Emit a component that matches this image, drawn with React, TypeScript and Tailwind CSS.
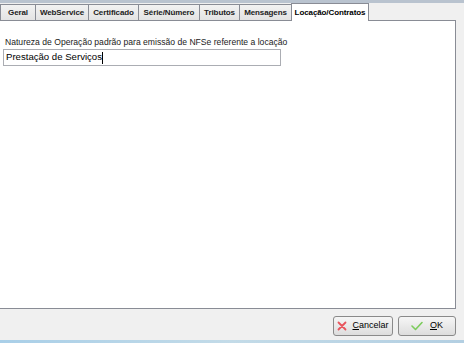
import React from "react"

const tabs = ["Geral", "WebService", "Certificado", "Série/Número", "Tributos", "Mensagens", "Locação/Contratos"]
const tabWidths = ["w-[36px]", "w-[53px]", "w-[50px]", "w-[61px]", "w-[40px]", "w-[52px]", "w-[78px]"]

const App = () => {
    return (
        <div className="w-[464px] h-[343px] bg-[#f0f0f0] flex flex-col overflow-hidden" style={{ fontFamily: "'Liberation Sans', Arial, sans-serif" }}>
            {/* tab strip */}
            <div className="h-[3px] bg-[#b9c3cf] shrink-0"></div>
            <div className="flex items-end h-[17px] shrink-0 bg-[#f0f0f0]">
                {tabs.map((tab, i) => {
                    const selected = i === tabs.length - 1
                    return selected ? (
                        <div key={tab} className={`${tabWidths[i]} h-[18px] -mb-px -ml-px bg-white border border-b-0 border-[#898c95] flex items-center justify-center whitespace-nowrap overflow-hidden text-[8px] font-bold tracking-[-0.1px] text-black z-10`}>
                            {tab}
                        </div>
                    ) : (
                        <div key={tab} className={`${tabWidths[i]} h-[16px] bg-gradient-to-b from-[#f2f2f2] to-[#e3e3e3] border-t border-r first:border-l border-[#898c95] flex items-center justify-center whitespace-nowrap overflow-hidden text-[8px] font-bold tracking-[-0.1px] text-[#222]`}>
                            {tab}
                        </div>
                    )
                })}
            </div>
            {/* tab panel */}
            <div className="flex flex-1 pr-[8px]">
                <div className="flex-1 bg-white border-t border-r border-b border-[#898c95] px-[3px] pt-[16px]">
                    <p className="text-[8.6px] text-[#222] leading-[11px] pl-[2px] whitespace-nowrap">Natureza de Operação padrão para emissão de NFSe referente a locação</p>
                    <div className="w-[278px] h-[17px] mt-[1px] border border-[#abadb3] flex items-center px-[2px] text-[9.6px] text-black whitespace-nowrap">
                        Prestação de Serviços<span className="w-px h-[12px] bg-black"></span>
                    </div>
                </div>
            </div>
            {/* bottom bar */}
            <div className="h-[31px] shrink-0 flex items-center justify-end gap-[5px] pr-[8px] pt-[2px]">
                <button className="w-[60px] h-[20px] rounded-[3px] border border-[#8a8a8a] bg-gradient-to-b from-[#f6f6f6] to-[#dddddd] flex items-center justify-center gap-[5px] text-[9px] text-black">
                    <svg width="10" height="10" viewBox="0 0 10 10"><path d="M1.5 1.5 L8.5 8.5 M8.5 1.5 L1.5 8.5" stroke="#e8545c" strokeWidth="1.8" strokeLinecap="round" /></svg>
                    <span><u>C</u>ancelar</span>
                </button>
                <button className="w-[58px] h-[20px] rounded-[3px] border border-[#8a8a8a] bg-gradient-to-b from-[#f6f6f6] to-[#dddddd] flex items-center justify-center gap-[7px] text-[9px] text-black">
                    <svg width="12" height="10" viewBox="0 0 12 10"><path d="M1 5 L4.5 8.5 L11 1.5" stroke="#7ccc5c" strokeWidth="1.6" fill="none" strokeLinecap="round" strokeLinejoin="round" /></svg>
                    <span><u>O</u>K</span>
                </button>
            </div>
            <div className="h-[3px] shrink-0 bg-gradient-to-r from-[#a9cfe8] via-[#c3dbe8] to-[#b3cfe2]"></div>
        </div>
    )
}

export default App
